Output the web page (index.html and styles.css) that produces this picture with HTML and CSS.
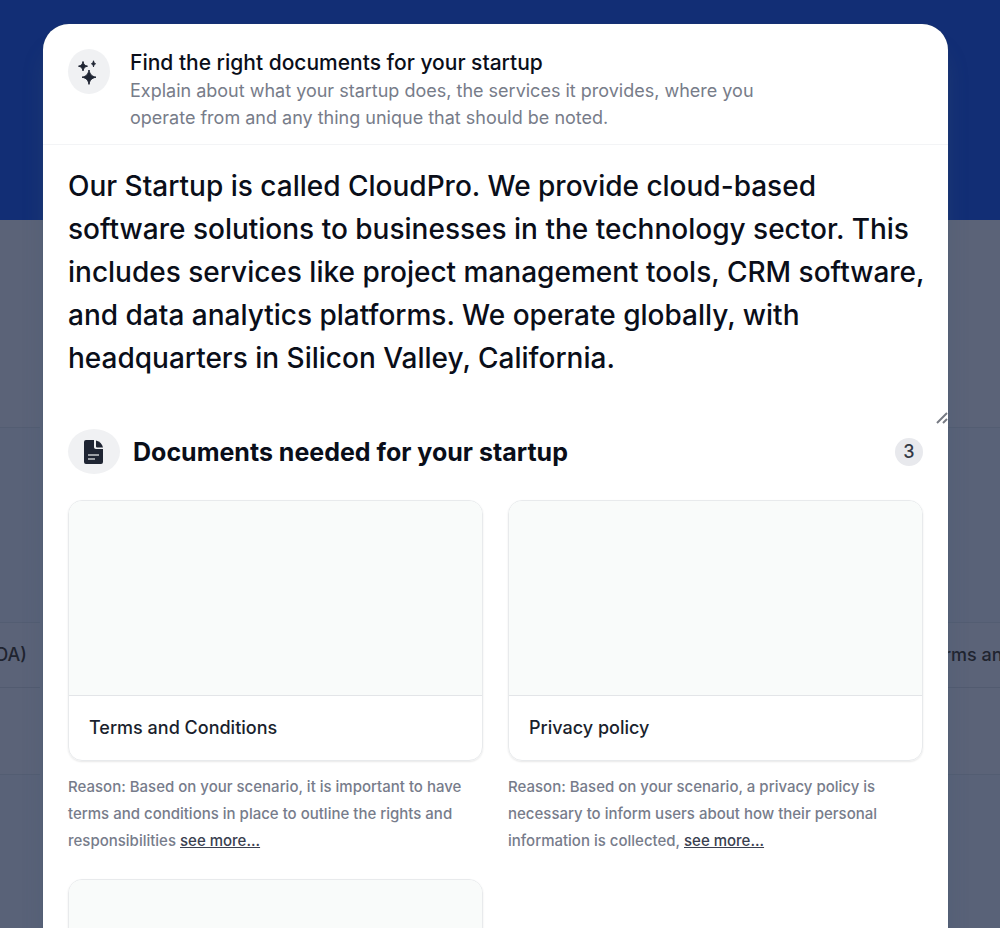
FILE: index.html
```html
<!DOCTYPE html>
<html lang="en">
<head>
<meta charset="utf-8">
<meta name="viewport" content="width=device-width, initial-scale=1">
<title>Find the right documents for your startup</title>
<link rel="stylesheet" href="styles.css">
</head>
<body>
<div class="page" aria-hidden="true">
  <div class="hero"></div>
  <div class="intro"></div>
  <div class="backdrop-row">
    <div class="backdrop-card backdrop-card-start"><div class="backdrop-preview"></div><div class="backdrop-name">(NDA)</div></div>
    <div class="backdrop-card"><div class="backdrop-preview"></div><div class="backdrop-name">Terms and</div></div>
  </div>
  <div class="backdrop-row backdrop-row-last">
    <div class="backdrop-card backdrop-card-start"><div class="backdrop-preview"></div></div>
    <div class="backdrop-card"><div class="backdrop-preview"></div></div>
  </div>
</div>
<div class="overlay">
  <main class="modal" role="dialog" aria-labelledby="modal-title">
    <header class="modal-header">
      <span class="icon-disc">
        <svg width="42" height="44" viewBox="0 0 42 44" aria-hidden="true"><path fill="#1f2533" stroke="#1f2533" stroke-width="1" stroke-linejoin="round" d="M21 20c1 4.500 2.500 6.200 7 7.200-4.500 1-6 2.600-7 7.200-1-4.600-2.500-6.200-7-7.200 4.500-1 6-2.700 7-7.200zM15 11.500c.6 2.900 1.600 4 4.500 4.700-2.900.7-3.900 1.800-4.500 4.700-.6-2.900-1.600-4-4.500-4.700 2.900-.7 3.900-1.800 4.500-4.700zM25.500 10.800c.4 1.800.8 2.500 2 3-1.200.5-1.600 1.200-2 3-.4-1.800-.8-2.500-2-3 1.200-.5 1.600-1.200 2-3z"/></svg>
      </span>
      <div class="modal-heading">
        <h1 class="modal-title" id="modal-title">Find the right documents for your startup</h1>
        <p class="modal-text"><label for="description">Explain about what your startup does, the services it provides, where you operate from and any thing unique that should be noted.</label></p>
      </div>
    </header>
    <textarea class="description" id="description" spellcheck="false">Our Startup is called CloudPro. We provide cloud-based software solutions to businesses in the technology sector. This includes services like project management tools, CRM software, and data analytics platforms. We operate globally, with headquarters in Silicon Valley, California.</textarea>
    <section class="results">
      <div class="results-header">
        <span class="icon-disc icon-disc-wide">
          <svg width="20" height="24" viewBox="0 0 20 24" aria-hidden="true"><path fill="#1f2533" d="M2 0h8v7c0 1.200.8 2 2 2h7v13a2 2 0 0 1-2 2H2a2 2 0 0 1-2-2V2a2 2 0 0 1 2-2z"/><path fill="#1f2533" d="M12 .5c4 1 6 3.500 7 7H13a1 1 0 0 1-1-1z"/><path stroke="#c5c7cc" stroke-width="1.500" d="M4 15h11M4 19h7"/></svg>
        </span>
        <h2 class="results-title">Documents needed for your startup</h2>
        <span class="count">3</span>
      </div>
      <div class="documents">
        <article class="document">
          <div class="card"><div class="preview"></div><h3 class="card-name">Terms and Conditions</h3></div>
          <p class="reason">Reason: Based on your scenario, it is important to have terms and conditions in place to outline the rights and responsibilities <a class="more" href="#">see more...</a></p>
        </article>
        <article class="document">
          <div class="card"><div class="preview"></div><h3 class="card-name">Privacy policy</h3></div>
          <p class="reason">Reason: Based on your scenario, a privacy policy is necessary to inform users about how their personal information is collected, <a class="more" href="#">see more...</a></p>
        </article>
        <article class="document">
          <div class="card"><div class="preview"></div></div>
        </article>
      </div>
    </section>
  </main>
</div>
</body>
</html>
```
FILE: styles.css
```css
* { box-sizing: border-box; }

body {
  margin: 0;
  height: 100vh;
  overflow: hidden;
  background: #5b6378;
  color: #0a0e19;
  font-family: Inter, "Liberation Sans", sans-serif;
}

h1, h2, h3, p { margin: 0; }

.page { height: 100vh; overflow: hidden; color: #20242f; }
.hero { height: 220px; background: #122e75; }
.intro { height: 207px; }
.backdrop-row { display: flex; justify-content: space-between; margin-bottom: 86px; }
.backdrop-card { width: 77px; border-bottom: 1px solid #525b70; }
.backdrop-card-start { width: 40px; }
.backdrop-preview {
  height: 196px;
  background: #596278;
  border-top: 1px solid #535d72;
  border-bottom: 1px solid #535d72;
}
.backdrop-name {
  display: flex;
  padding: 20px 0;
  font-size: 18px;
  font-weight: 500;
  line-height: 24px;
  white-space: nowrap;
}
.backdrop-card-start .backdrop-name { justify-content: flex-end; padding-right: 13px; }

.overlay {
  position: absolute;
  inset: 0;
  display: flex;
  justify-content: center;
  padding: 24px 52px 0 43px;
  overflow: hidden;
}

.modal {
  width: 100%;
  height: max-content;
  background: #fff;
  border-radius: 26px 26px 0 0;
  box-shadow: 0 24px 20px #3c567044, 0 0 1px #344967;
}

.modal-header {
  display: flex;
  gap: 20px;
  padding: 25px 25px 13px;
  border-bottom: 1px solid #f3f4f6;
}

.icon-disc {
  display: flex;
  flex: none;
  align-items: center;
  justify-content: center;
  width: 42px;
  height: 45px;
  border-radius: 50%;
  background: #f0f1f3;
}
.icon-disc-wide { width: 52px; }

.modal-title { font-size: 21px; font-weight: 500; line-height: 28px; }
.modal-text {
  max-width: 660px;
  color: #777c89;
  font-size: 18px;
  line-height: 27px;
}

.description {
  display: block;
  width: 100%;
  height: 280px;
  padding: 20px 22px 0 25px;
  border: 0;
  outline: 0;
  overflow: hidden;
  resize: vertical;
  background: transparent;
  color: #0a0e19;
  font-family: inherit;
  font-size: 28px;
  font-weight: 500;
  line-height: 43px;
}
.description::-webkit-resizer {
  background: url("data:image/svg+xml,%3Csvg xmlns='http://www.w3.org/2000/svg' width='15' height='15'%3E%3Cpath d='M4 13 14 3M10 13l4-4' stroke='%23777b84' stroke-width='2'/%3E%3C/svg%3E") no-repeat right bottom;
}

.results { padding: 4px 25px 0; }
.results-header { display: flex; align-items: center; gap: 13px; margin-bottom: 26px; }
.results-title { flex: 1; font-size: 25px; font-weight: 700; line-height: 36px; }
.count {
  width: 28px;
  border-radius: 50%;
  background: #e8e9ed;
  color: #333946;
  font-size: 18px;
  font-weight: 500;
  line-height: 28px;
  text-align: center;
}

.documents { display: grid; grid-template-columns: 1fr 1fr; gap: 25px; }
.card {
  overflow: hidden;
  border: 1px solid #e8eaec;
  border-radius: 14px;
  box-shadow: 0 1px 2px #00000018;
}
.preview { height: 195px; background: #f9fbfa; border-bottom: 1px solid #e3e5e8; }
.card-name {
  padding: 20px;
  color: #1a1f2d;
  font-size: 18px;
  font-weight: 500;
  line-height: 24px;
}
.reason {
  margin-top: 12px;
  color: #777c8b;
  font-size: 15px;
  font-weight: 500;
  line-height: 27px;
}
.more { color: #3a4050; text-decoration: underline; }
```
